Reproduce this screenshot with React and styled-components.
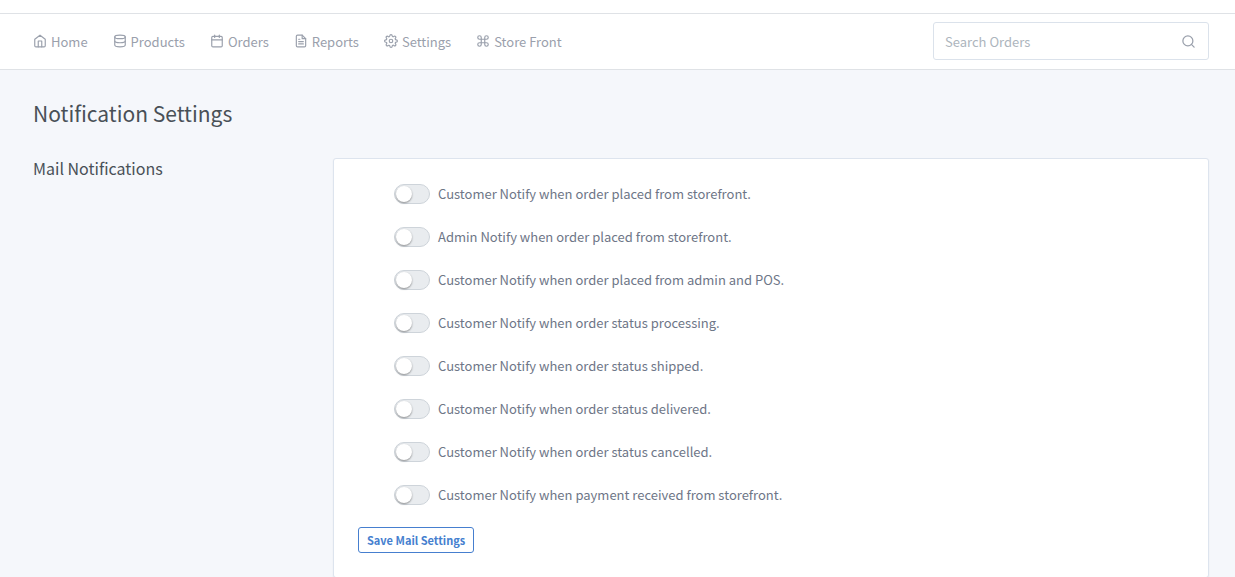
import React, { useState } from "react";
import styled, { createGlobalStyle } from "styled-components";
import {
  FiCalendar,
  FiCommand,
  FiDatabase,
  FiFileText,
  FiHome,
  FiSearch,
  FiSettings,
} from "react-icons/fi";

const GlobalStyle = createGlobalStyle`
  *, *::before, *::after { box-sizing: border-box; }
  body {
    margin: 0;
    background: #f5f7fb;
    color: #495057;
    font-family: "Noto Sans CJK SC", "Noto Sans", sans-serif;
    font-size: 13px;
    line-height: 24px;
  }
  button, input { font: inherit; }
`;

const Page = styled.div`
  overflow-x: hidden;
`;

const TopStrip = styled.div`
  height: 14px;
  background: #fff;
  border-bottom: 1px solid #dfe2e6;
`;

const Header = styled.header`
  display: flex;
  align-items: center;
  justify-content: space-between;
  gap: 24px;
  padding: 8px 26px 9px 33px;
  background: #fff;
  border-bottom: 1px solid #dfe2e6;
`;

const Nav = styled.nav`
  display: flex;
  align-items: center;
  gap: 25px;
  padding-top: 2px;
`;

const NavLink = styled.a`
  display: flex;
  align-items: center;
  gap: 4px;
  color: #9aa0ac;
  text-decoration: none;
  white-space: nowrap;
  svg { margin-bottom: 2px; }
`;

const SearchForm = styled.form`
  display: flex;
  align-items: center;
  width: 276px;
  height: 38px;
  padding: 0 12px 0 11px;
  border: 1px solid #dbe2eb;
  border-radius: 3px;
  background: #fff;
  color: #9aa0ac;
`;

const SearchInput = styled.input`
  flex: 1;
  min-width: 0;
  padding: 2px 0 0;
  border: 0;
  outline: 0;
  background: transparent;
  color: #495057;
  &::placeholder { color: #adb5bd; opacity: 1; }
`;

const Main = styled.main`
  padding: 27px 26px 0 33px;
`;

const PageTitle = styled.h1`
  margin: 0 0 29px;
  font-size: 21px;
  font-weight: 400;
  line-height: 32px;
`;

const Columns = styled.div`
  display: grid;
  grid-template-columns: minmax(0, 276fr) minmax(0, 876fr);
  gap: 24px;
`;

const SectionTitle = styled.h2`
  margin: 0;
  font-size: 16px;
  font-weight: 400;
  line-height: 20px;
`;

const Card = styled.form`
  padding: 23px 24px 24px;
  border: 1px solid #dde4ee;
  border-radius: 3px;
  background: #fff;
  box-shadow: 0 1px 2px rgba(0, 0, 0, 0.05);
`;

const SwitchList = styled.div`
  display: flex;
  flex-direction: column;
  gap: 19px;
  padding: 0 36px;
  margin-bottom: 20px;
`;

const SwitchRow = styled.label`
  display: flex;
  align-items: center;
  align-self: flex-start;
  gap: 8px;
  color: #6e7687;
  cursor: pointer;
`;

const Switch = styled.input`
  appearance: none;
  display: flex;
  flex: none;
  width: 36px;
  height: 20px;
  margin: 0;
  border: 1px solid #ced4da;
  border-radius: 10px;
  background: #e9ecef;
  cursor: pointer;
  &::before {
    content: "";
    width: 16px;
    height: 16px;
    margin: 1px;
    border-radius: 50%;
    background: #fff;
    box-shadow: 0 1px 2px rgba(0, 0, 0, 0.4);
    transition: margin 0.2s;
  }
  &:checked { background: #467fcf; }
  &:checked::before { margin-left: 17px; }
`;

const SaveButton = styled.button`
  display: block;
  padding: 0 8px;
  border: 1px solid #467fcf;
  border-radius: 3px;
  background: transparent;
  color: #467fcf;
  font-size: 11px;
  font-weight: 700;
  line-height: 24px;
  cursor: pointer;
`;

const navItems = [
  { label: "Home", Icon: FiHome },
  { label: "Products", Icon: FiDatabase },
  { label: "Orders", Icon: FiCalendar },
  { label: "Reports", Icon: FiFileText },
  { label: "Settings", Icon: FiSettings },
  { label: "Store Front", Icon: FiCommand },
];

const options = [
  "Customer Notify when order placed from storefront.",
  "Admin Notify when order placed from storefront.",
  "Customer Notify when order placed from admin and POS.",
  "Customer Notify when order status processing.",
  "Customer Notify when order status shipped.",
  "Customer Notify when order status delivered.",
  "Customer Notify when order status cancelled.",
  "Customer Notify when payment received from storefront.",
];

export default function App() {
  const [enabled, setEnabled] = useState({});
  return (
    <Page>
      <GlobalStyle />
      <TopStrip />
      <Header>
        <Nav aria-label="Main">
          {navItems.map(({ label, Icon }) => (
            <NavLink key={label} href="#">
              <Icon size={14} aria-hidden="true" />
              {label}
            </NavLink>
          ))}
        </Nav>
        <SearchForm role="search" onSubmit={(e) => e.preventDefault()}>
          <SearchInput type="search" placeholder="Search Orders" aria-label="Search Orders" />
          <FiSearch size={15} aria-hidden="true" />
        </SearchForm>
      </Header>
      <Main>
        <PageTitle>Notification Settings</PageTitle>
        <Columns>
          <SectionTitle>Mail Notifications</SectionTitle>
          <Card onSubmit={(e) => e.preventDefault()}>
            <SwitchList>
              {options.map((text) => (
                <SwitchRow key={text}>
                  <Switch
                    type="checkbox"
                    checked={!!enabled[text]}
                    onChange={(e) => setEnabled({ ...enabled, [text]: e.target.checked })}
                  />
                  {text}
                </SwitchRow>
              ))}
            </SwitchList>
            <SaveButton type="submit">Save Mail Settings</SaveButton>
          </Card>
        </Columns>
      </Main>
    </Page>
  );
}
